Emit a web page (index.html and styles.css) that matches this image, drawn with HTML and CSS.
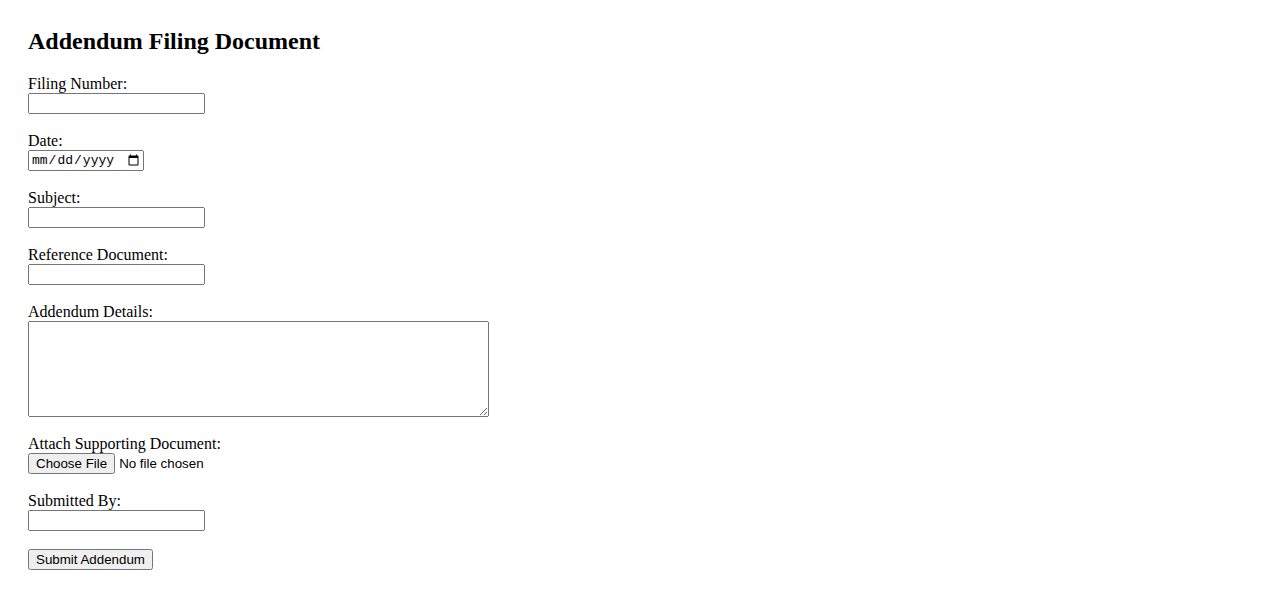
FILE: index.html
```html
<!DOCTYPE html>
<html lang="en">

<head>
    <meta charset="UTF-8">
    <title>Addendum Filing Document</title>
    <link rel="stylesheet" href="styles.css">
</head>

<body>
    <main class="page">
        <h2 class="title">Addendum Filing Document</h2>

        <form class="addendum-form">
            <div class="field">
                <label for="filing-number">Filing Number:</label>
                <input type="text" id="filing-number" class="text-input">
            </div>
            <div class="field">
                <label for="filing-date">Date:</label>
                <input type="date" id="filing-date" class="date-input">
            </div>
            <div class="field">
                <label for="subject">Subject:</label>
                <input type="text" id="subject" class="text-input">
            </div>
            <div class="field">
                <label for="reference">Reference Document:</label>
                <input type="text" id="reference" class="text-input">
            </div>
            <div class="field">
                <label for="details">Addendum Details:</label>
                <textarea id="details" class="details"></textarea>
            </div>
            <div class="field">
                <label for="attachment">Attach Supporting Document:</label>
                <input type="file" id="attachment" class="file-input">
            </div>
            <div class="field">
                <label for="submitted-by">Submitted By:</label>
                <input type="text" id="submitted-by" class="text-input">
            </div>
            <button type="submit" class="submit">Submit Addendum</button>
        </form>
    </main>
</body>

</html>
```

FILE: styles.css
```css
body {
    margin: 8px;
    font-family: "Liberation Serif", "Times New Roman", serif;
    font-size: 16px;
    color: #000;
    background: #fff;
}

.page {
    padding: 20px;
}

.title {
    font-size: 24px;
    font-weight: bold;
    margin: 0 0 20px 0;
}

.field {
    margin-bottom: 18px;
}

.field label {
    display: block;
}

input,
textarea,
button {
    font-family: "Liberation Sans", Arial, sans-serif;
    font-size: 13.333px;
}

.text-input {
    display: block;
    box-sizing: border-box;
    width: 177px;
    height: 21px;
    margin: 0;
}

.date-input {
    display: block;
    box-sizing: border-box;
    width: 116px;
    height: 21px;
    margin: 0;
    font-family: "Liberation Mono", "DejaVu Sans Mono", monospace;
    font-size: 13px;
}

.details {
    display: block;
    box-sizing: border-box;
    width: 461px;
    height: 96px;
    margin: 0;
}

.file-input {
    display: block;
    margin: 0;
}

.submit {
    display: block;
    margin: 0;
}
```
